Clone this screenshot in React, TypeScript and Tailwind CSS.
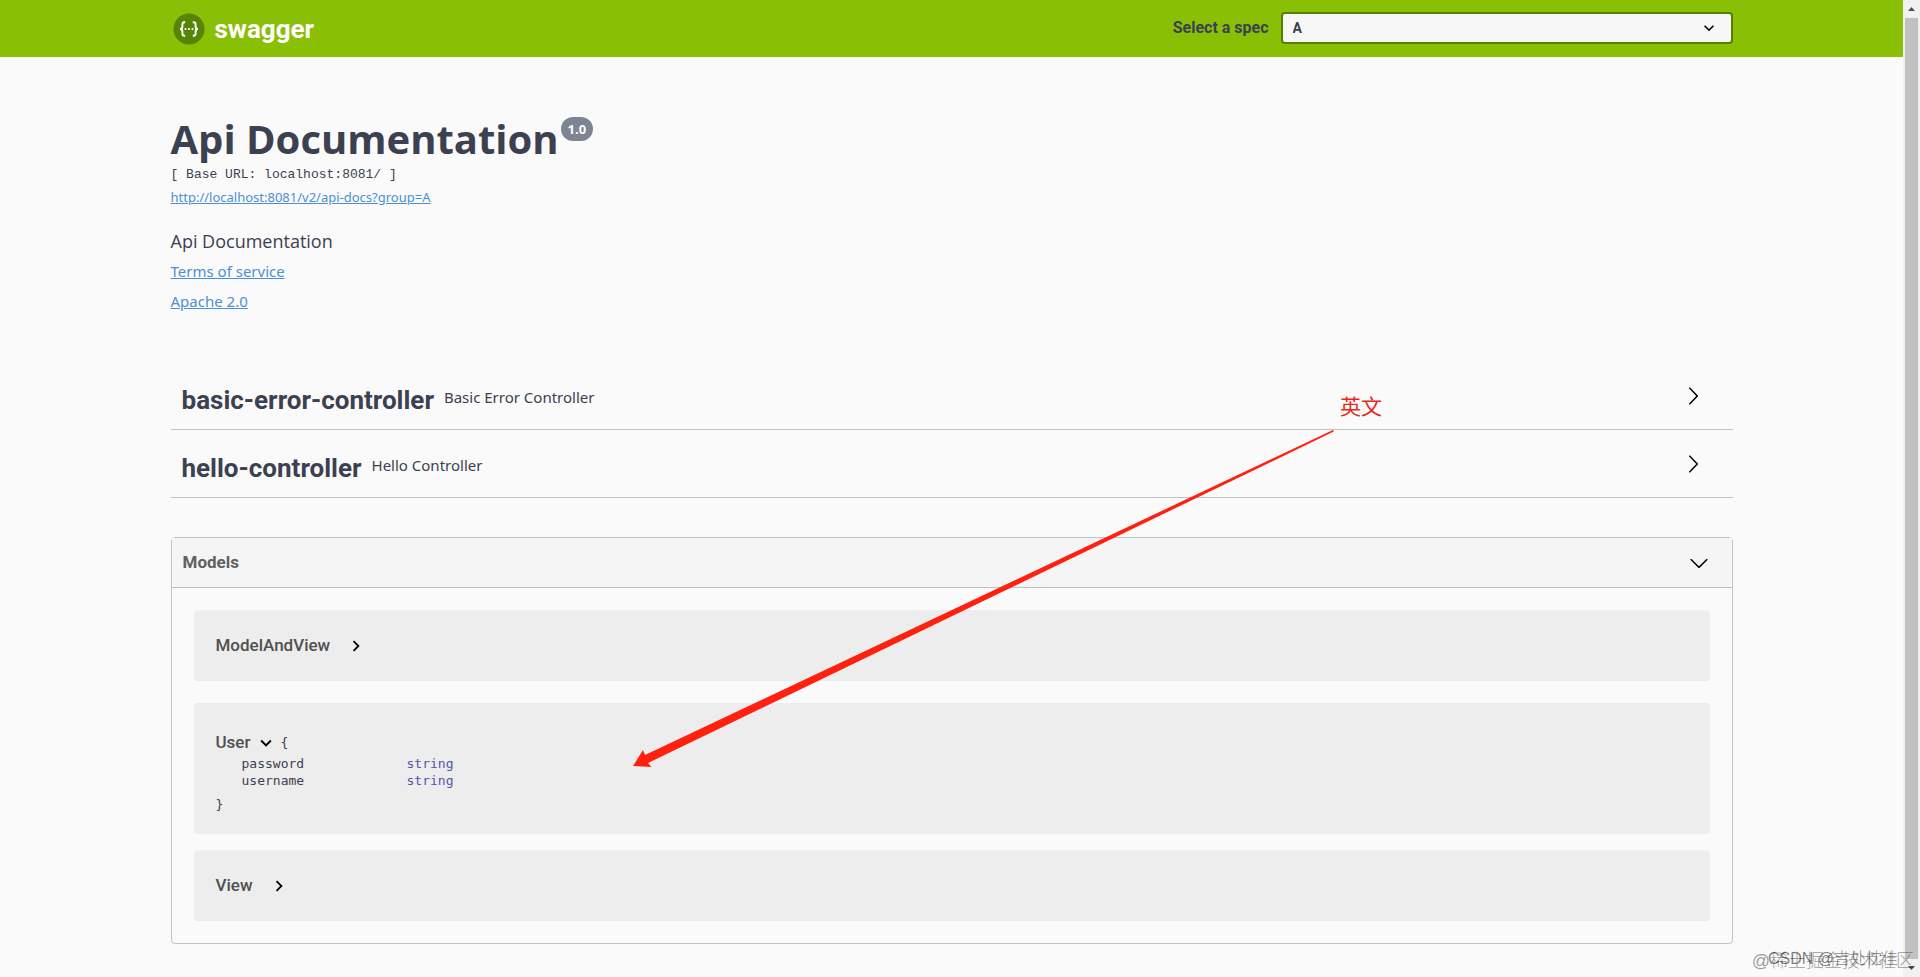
import React, { useState } from 'react'

type Property = { name: string; type: string };
type Model = { name: string; properties: Property[]; open: boolean };

const tags = [
    { name: "basic-error-controller", description: "Basic Error Controller" },
    { name: "hello-controller", description: "Hello Controller" },
];

const initialModels: Model[] = [
    { name: "ModelAndView", properties: [], open: false },
    {
        name: "User",
        properties: [
            { name: "password", type: "string" },
            { name: "username", type: "string" },
        ],
        open: true,
    },
    { name: "View", properties: [], open: false },
];

// Thin arrow used on the sections
function LargeArrow({ down = false }: { down?: boolean }) {
    return (
        <svg viewBox="0 0 20 20" className={down ? "size-5 rotate-90" : "size-5"} aria-hidden="true">
            <path d="M13.25 10L6.109 2.58c-.268-.27-.268-.707 0-.979.268-.27.701-.27.969 0l7.83 7.908c.268.271.268.709 0 .979l-7.83 7.908c-.268.271-.701.27-.969 0-.268-.269-.268-.707 0-.979L13.25 10z" />
        </svg>
    )
}

// Bold arrow used on the model toggles
function SmallArrow({ down = false }: { down?: boolean }) {
    return (
        <svg viewBox="0 0 24 24" className={down ? "size-[22px] rotate-90" : "size-[22px]"} aria-hidden="true">
            <path d="M10 6L8.59 7.41 13.17 12l-4.58 4.59L10 18l6-6z" />
        </svg>
    )
}

function Logo() {
    return (
        <a href="#" className="flex items-center gap-2.5 pl-0.5 text-white">
            <svg viewBox="0 0 32 32" className="size-8" aria-hidden="true">
                <circle cx="16" cy="16" r="15.5" fill="#578405" />
                <g fill="none" stroke="#fff" strokeWidth="1.9">
                    <path d="M12.2 9.2h-.8c-1.5 0-2 .7-2 2v2.4c0 1.5-.7 2.3-2.3 2.4 1.6.1 2.3.9 2.3 2.4v2.4c0 1.3.5 2 2 2h.8" />
                    <path d="M19.8 9.2h.8c1.5 0 2 .7 2 2v2.4c0 1.5.7 2.3 2.3 2.4-1.6.1-2.3.9-2.3 2.4v2.4c0 1.3-.5 2-2 2h-.8" />
                </g>
                <g fill="#fff">
                    <circle cx="12.5" cy="16" r="1.1" />
                    <circle cx="16" cy="16" r="1.1" />
                    <circle cx="19.5" cy="16" r="1.1" />
                </g>
            </svg>
            <span className="text-[26px] leading-8 font-bold">swagger</span>
        </a>
    )
}

function TopBar() {
    const [spec, setSpec] = useState("A");

    return (
        <header className="bg-[#89bf04] font-[Roboto,sans-serif]">
            <div className="mx-auto flex h-[57px] max-w-[1602px] items-center justify-between px-5">
                <Logo />
                <div className="flex items-center gap-3 pb-0.5">
                    <label htmlFor="spec" className="font-bold text-[#3b4151]">Select a spec</label>
                    <div className="relative">
                        <select
                            id="spec"
                            value={spec}
                            onChange={(e) => setSpec(e.target.value)}
                            className="block h-8 w-[452px] appearance-none rounded border-2 border-[#547f00] bg-[#f7f7f7] px-2.5 text-sm font-bold text-[#3b4151]"
                        >
                            <option>A</option>
                        </select>
                        <svg viewBox="0 0 24 24" className="pointer-events-none absolute top-1.5 right-3.5 size-5 rotate-90" aria-hidden="true">
                            <path d="M10 6L8.59 7.41 13.17 12l-4.58 4.59L10 18l6-6z" />
                        </svg>
                    </div>
                </div>
            </div>
        </header>
    )
}

function Info() {
    return (
        <section className="pt-[57px]">
            <h1 className="flex items-start gap-0.5 text-[40px] leading-[50px] font-bold">
                Api Documentation
                <span className="mt-[3px] rounded-full bg-[#7d8492] px-[7px] text-[13px] leading-6 text-white">1.0</span>
            </h1>
            <p className="font-['Liberation_Mono',monospace] text-[13px] leading-[22px]">[ Base URL: localhost:8081/ ]</p>
            <a href="#" className="block w-fit font-['Noto_Sans',sans-serif] text-[13px] leading-[23px] text-[#4c90d4] underline">http://localhost:8081/v2/api-docs?group=A</a>
            <p className="pt-5 text-lg leading-6">Api Documentation</p>
            <a href="#" className="block w-fit pt-1.5 font-['Noto_Sans',sans-serif] text-[15px] leading-6 text-[#4c90d4] underline">Terms of service</a>
            <a href="#" className="block w-fit pt-1.5 font-['Noto_Sans',sans-serif] text-[15px] leading-6 text-[#4c90d4] underline">Apache 2.0</a>
        </section>
    )
}

function TagSections() {
    return (
        <section className="pt-[49px]">
            {tags.map((tag) => (
                <div key={tag.name} className="flex h-[68px] items-center border-b border-[#3b4151]/30 pr-[30px] pl-[11px]">
                    <h2 className="pt-2 font-[Roboto,sans-serif] text-[26px] leading-8 font-bold">{tag.name}</h2>
                    <p className="flex-1 pt-1 pl-2.5 font-['Noto_Sans',sans-serif] text-[15px]">{tag.description}</p>
                    <button type="button" aria-label={`Expand ${tag.name}`}>
                        <LargeArrow />
                    </button>
                </div>
            ))}
        </section>
    )
}

function ModelCard({ model, onToggle }: { model: Model; onToggle: () => void }) {
    if (!model.open) {
        return (
            <div className="mb-[22px] flex h-[71px] items-center rounded bg-[#ededed] px-[22px]">
                <button type="button" onClick={onToggle} className="flex items-center gap-[15px] font-[Roboto,sans-serif] text-[17px] font-medium text-[#505050]">
                    {model.name}
                    <SmallArrow />
                </button>
            </div>
        )
    }

    return (
        <div className="mb-4 rounded bg-[#ededed] px-[22px] pt-7 pb-[19px] font-['DejaVu_Sans_Mono',monospace] text-[13px]">
            <div className="flex h-6 items-center gap-1">
                <button type="button" onClick={onToggle} className="flex items-center gap-1 font-[Roboto,sans-serif] text-[17px] font-medium text-[#505050]">
                    {model.name}
                    <SmallArrow down />
                </button>
                <span>{"{"}</span>
            </div>
            <table className="ml-[26px] leading-[17px]">
                <tbody>
                    {model.properties.map((prop) => (
                        <tr key={prop.name}>
                            <th scope="row" className="w-[165px] p-0 text-left font-normal">{prop.name}</th>
                            <td className="p-0 text-[#5555aa]">{prop.type}</td>
                        </tr>
                    ))}
                </tbody>
            </table>
            <div className="pt-1.5 leading-5">{"}"}</div>
        </div>
    )
}

function Models() {
    const [models, setModels] = useState(initialModels);
    const [open, setOpen] = useState(true);

    const toggleModel = (name: string) => {
        setModels(models.map((m) => (m.name === name ? { ...m, open: !m.open } : m)));
    };

    return (
        <section className="mt-[39px] rounded border border-[#3b4151]/30">
            <button
                type="button"
                onClick={() => setOpen(!open)}
                className="flex h-[50px] w-full items-center justify-between border-b border-[#3b4151]/30 bg-[#f5f5f5] pr-[23px] pl-[11px] font-[Roboto,sans-serif] text-[17px] font-bold text-[#606060]"
            >
                Models
                <LargeArrow down={open} />
            </button>
            {open && (
                <div className="flex flex-col px-[22px] pt-[22px]">
                    {models.map((m) => (
                        <ModelCard key={m.name} model={m} onToggle={() => toggleModel(m.name)} />
                    ))}
                </div>
            )}
        </section>
    )
}

function ScrollBar() {
    return (
        <div className="flex w-[17px] flex-col items-center bg-[#f1f1f1]" aria-hidden="true">
            <svg viewBox="0 0 17 18" className="h-[18px] w-[17px]" fill="#505050">
                <path d="M5 11l3.5-4 3.5 4z" />
            </svg>
            <div className="w-[13px] flex-1 bg-[#c1c1c1]" />
            <svg viewBox="0 0 17 18" className="h-[18px] w-[17px]" fill="#505050">
                <path d="M5 7l3.5 4L12 7z" />
            </svg>
        </div>
    )
}

export default function App() {
    return (
        <div className="relative flex h-screen overflow-hidden bg-[#fafafa] font-['Open_Sans',sans-serif] text-[#3b4151]">
            <div className="min-w-0 flex-1">
                <TopBar />
                <main className="mx-auto max-w-[1602px] px-5">
                    <Info />
                    <TagSections />
                    <Models />
                </main>
            </div>
            <ScrollBar />

            {/* annotation drawn over the page */}
            <svg viewBox="0 0 701 338" className="pointer-events-none absolute top-[430px] left-[633px] h-[338px] w-[701px]" fill="#ff2010" aria-hidden="true">
                <path d="M0 336L10 320l2 5L700 0l.8 1.600L15 333l3.500 4z" />
            </svg>
            <span className="absolute top-[389px] left-[1340px] font-['Noto_Sans_CJK_SC',sans-serif] text-[21px] leading-8 text-[#e8291c]">英文</span>

            {/* watermarks */}
            <span className="absolute right-[22px] bottom-1.5 font-['Liberation_Sans','Noto_Sans_CJK_SC',sans-serif] text-base leading-6 font-light text-black/50">CSDN @吉处忱佳</span>
            <span className="absolute right-1.5 bottom-1 font-['Liberation_Sans','Noto_Sans_CJK_SC',sans-serif] text-lg leading-6 font-light text-black/40">@稀土掘金技术社区</span>
        </div>
    )
}
